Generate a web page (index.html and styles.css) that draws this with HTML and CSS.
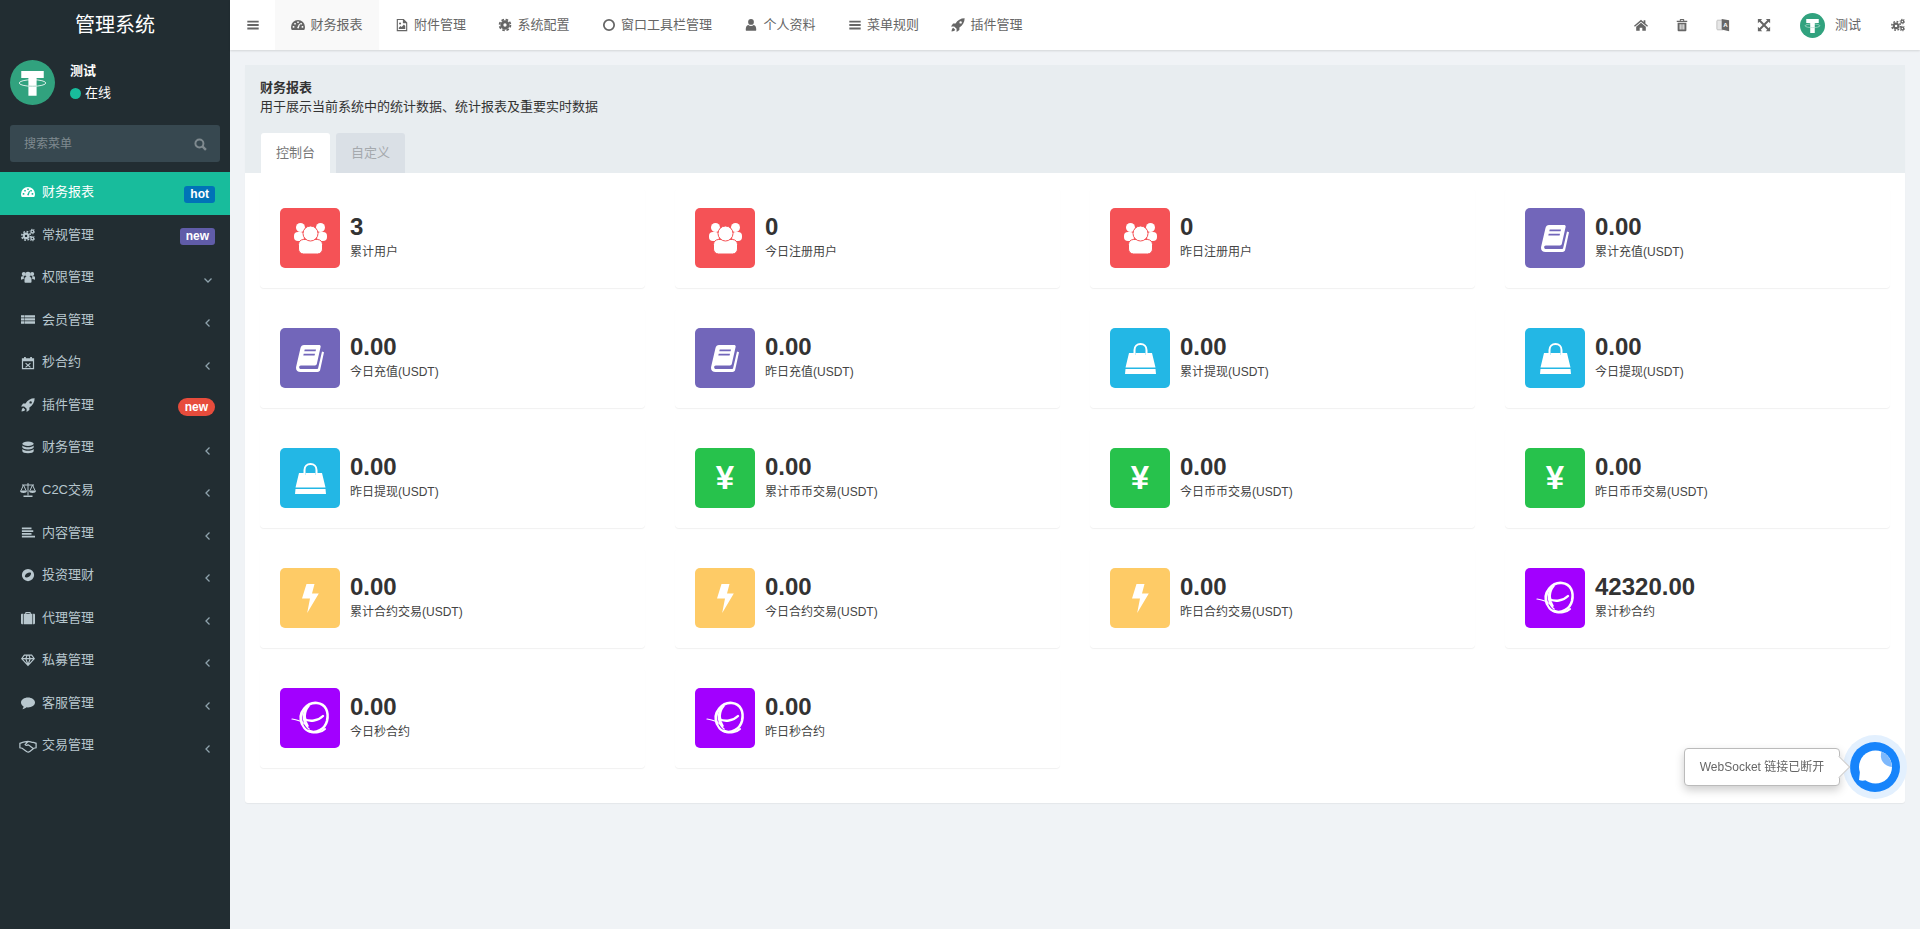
FILE: index.html
```html
<!DOCTYPE html>
<html lang="zh-CN">
<head>
    <meta charset="UTF-8">
    <title>管理系统</title>
    <link rel="stylesheet" href="styles.css">
</head>
<body>
    <!-- Icon sprite -->
    <svg class="sprite" xmlns="http://www.w3.org/2000/svg">
        <symbol id="i-dashboard" viewBox="0 0 16 16"><path fill-rule="evenodd" d="M8 2.2a8 8 0 0 0-8 8c0 1.4.3 2.6.9 3.6h14.2c.6-1 .9-2.2.9-3.6a8 8 0 0 0-8-8zM2 9.2h1.8V11H2zM3.7 5.6h1.8v1.8H3.7zM7.1 4h1.8v1.8H7.1zM10.6 5.6h1.8v1.8h-1.8zM12.2 9.2H14V11h-1.8zM6.9 11.3l2.4-4.8 1 .4-1.5 5z"/></symbol>
        <symbol id="i-cogs" viewBox="0 0 16 16"><g fill="none" stroke="currentColor"><circle cx="5.8" cy="9" r="2.6" stroke-width="2.4"/><circle cx="5.8" cy="9" r="4.9" stroke-width="1.8" stroke-dasharray="2 1.85"/><circle cx="13" cy="4" r="1.5" stroke-width="1.4"/><circle cx="13" cy="4" r="2.6" stroke-width="1.2" stroke-dasharray="1.2 1.25"/><circle cx="13" cy="12" r="1.5" stroke-width="1.4"/><circle cx="13" cy="12" r="2.6" stroke-width="1.2" stroke-dasharray="1.2 1.25"/></g></symbol>
        <symbol id="i-users" viewBox="0 0 16 16"><circle cx="3.2" cy="4.6" r="2.3"/><circle cx="12.8" cy="4.6" r="2.3"/><circle cx="8" cy="5" r="3.1"/><path d="M0 11V8.600c0-1 .8-1.600 1.600-1.600h2c-.5 1-.6 2-.4 3.200-1 .1-2 .4-3.200.8zM16 11V8.600c0-1-.8-1.600-1.600-1.600h-2c.5 1 .6 2 .4 3.200 1 .1 2 .4 3.200.8zM4 10c0-1.200.8-2 1.800-2h4.400c1 0 1.800.8 1.800 2v3.700c0 .6-.4.8-1 .8H5c-.6 0-1-.2-1-.8z"/></symbol>
        <symbol id="i-list" viewBox="0 0 16 16"><path d="M0 2.500h3.800v2.700H0zM4.300 2.500H16v2.700H4.300zM0 6h3.800v2.700H0zM4.300 6H16v2.700H4.300zM0 9.500h3.800v2.700H0zM4.300 9.500H16v2.700H4.300z"/></symbol>
        <symbol id="i-calendar" viewBox="0 0 16 16"><path fill-rule="evenodd" d="M1 2.500h2.500V1h2v1.500h5V1h2v1.500H15V15H1zM2.400 6v7.600h11.200V6z"/><path d="M5.600 7.600l2.400 2 2.400-2 .8.9L9 10.500l2.200 2-.8.9L8 11.400l-2.400 2-.8-.9 2.200-2-2.200-2z"/></symbol>
        <symbol id="i-rocket" viewBox="0 0 16 16"><path fill-rule="evenodd" d="M15.600.4C11 .4 7.400 2.600 5.200 6.400H2.400L0 9.600h3.600l2.800 2.800V16l3.200-2.400v-2.800c3.800-2.200 6-5.800 6-10.400zM11 3.600a1.400 1.400 0 1 1 0 2.800 1.400 1.400 0 0 1 0-2.800z"/><path d="M2.600 11.200c-1.200.6-1.800 2-2 4.200 2.200-.2 3.600-.8 4.200-2z"/></symbol>
        <symbol id="i-database" viewBox="0 0 16 16"><ellipse cx="8" cy="3.200" rx="6.500" ry="2.500"/><path d="M1.500 5v2.200c0 1.400 2.900 2.500 6.500 2.500s6.500-1.100 6.500-2.500V5C13.400 6.400 10.800 7 8 7S2.600 6.400 1.500 5zM1.500 9.200v2.200C1.500 12.900 4.400 14 8 14s6.500-1.100 6.500-2.600V9.200C13.400 10.600 10.800 11.200 8 11.200S2.600 10.600 1.500 9.200z"/></symbol>
        <symbol id="i-scale" viewBox="0 0 16 16"><path fill="none" stroke="currentColor" d="M8 1v12.500M2 3h12M3.500 3L1 8.500M3.500 3L6 8.500M12.500 3L10 8.500M12.500 3L15 8.500"/><path d="M0 8.500h7C7 10.300 5.500 11 3.500 11S0 10.300 0 8.500zM9 8.500h7c0 1.800-1.500 2.500-3.500 2.500S9 10.300 9 8.500zM3.500 13.500h9V15h-9z"/></symbol>
        <symbol id="i-align" viewBox="0 0 16 16"><path d="M1 1.800h11v1.900H1zM1 4.900h13v1.900H1zM1 8h11v1.900H1zM1 11.100h15V13H1z"/></symbol>
        <symbol id="i-compass" viewBox="0 0 16 16"><path fill-rule="evenodd" d="M8 1a7 7 0 1 1 0 14A7 7 0 0 1 8 1zM4.600 10.400c.8.800 3.200.6 4.900-.6 1.400-1.100 2.300-3.300 1.900-4.200-.8-.6-3.300-.4-4.900.6-1.500 1-2.400 3.300-1.900 4.200z"/></symbol>
        <symbol id="i-briefcase" viewBox="0 0 16 16"><path fill-rule="evenodd" d="M4.800 3V2c0-.6.4-1 1-1h4.400c.6 0 1 .4 1 1v1H13v12H3V3zM6 3h4V2.200H6z"/><path d="M0 4.200C0 3.500.5 3 1 3h1.200v12H1c-.5 0-1-.5-1-1.200zM16 4.200c0-.7-.5-1.200-1-1.200h-1.200v12H15c.5 0 1-.5 1-1.200z"/></symbol>
        <symbol id="i-diamond" viewBox="0 0 16 16"><path fill="none" stroke="currentColor" stroke-width="1.300" d="M3.800 2.500h8.400L15.200 6.500 8 14.200.8 6.500zM.8 6.500h14.400M5.500 6.500L8 13.500l2.500-7M5.500 6.500l1.500-4M10.500 6.500L9 2.500"/></symbol>
        <symbol id="i-comment" viewBox="0 0 16 16"><path d="M8 1.800c4.400 0 8 2.500 8 5.600S12.400 13 8 13l-1.600-.1C5 14.200 3.200 15 1.500 15c.8-.9 1.300-1.900 1.500-3.100C1.200 10.800 0 9.200 0 7.400 0 4.300 3.600 1.800 8 1.800z"/></symbol>
        <symbol id="i-handshake" viewBox="0 0 20 16"><path fill="none" stroke="currentColor" stroke-width="1.400" d="M1 5l3-1c2 0 3-1.200 6-1.200 2.500 0 3.500 1.200 6 1.200l3 1v5l-2.500.5L12 14c-1 1-2.500.8-3.600 0L3.500 10.500 1 10zM10 3L6.800 6.500c1 1.200 2.500 1 3.400.2 1.200.3 3.500 2.500 5.300 3.800"/></symbol>
        <symbol id="i-bars" viewBox="0 0 16 16"><path d="M1.500 3h13v2.200h-13zM1.500 6.900h13v2.200h-13zM1.500 10.800h13V13h-13z"/></symbol>
        <symbol id="i-file" viewBox="0 0 16 16"><path fill-rule="evenodd" d="M2 1h8l4 4v10H2zM3.300 2.300v11.400h9.400V6H9V2.300z"/><circle cx="5.800" cy="6.300" r="1.200"/><path d="M4.300 12.500V11l2-2 1.300 1.300 2.600-2.800 1.500 1.700v3.300z"/></symbol>
        <symbol id="i-gear" viewBox="0 0 16 16"><g fill="none" stroke="currentColor"><circle cx="8" cy="8" r="3.600" stroke-width="3.400"/><circle cx="8" cy="8" r="6.200" stroke-width="2" stroke-dasharray="2.900 1.970"/></g></symbol>
        <symbol id="i-circle" viewBox="0 0 16 16"><circle cx="8" cy="8" r="5.900" fill="none" stroke="currentColor" stroke-width="2"/></symbol>
        <symbol id="i-user" viewBox="0 0 16 16"><circle cx="8" cy="4.500" r="3.300"/><path d="M3 14.500c-.8 0-1-.5-1-1.200 0-2.800.8-5 2.900-5.300.8.700 1.900 1.100 3.100 1.100s2.300-.4 3.100-1.100c2.100.3 2.900 2.500 2.900 5.300 0 .7-.2 1.200-1 1.200z"/></symbol>
        <symbol id="i-home" viewBox="0 0 16 16"><path d="M8 2L0 8.800l1 1.100L8 4.200l7 5.700 1-1.100-3-2.500V2.500h-2V4.700z"/><path d="M8 5.500l-5.500 4.400V14.500h4v-3.500h3v3.500h4V9.900z"/></symbol>
        <symbol id="i-trash" viewBox="0 0 16 16"><path fill-rule="evenodd" d="M5.500 3V1.800c0-.5.300-.8.800-.8h3.400c.5 0 .8.300.8.800V3H14v1.500H2V3zM6.700 3h2.600v-.8H6.700zM3 5.500h10V14c0 .6-.4 1-1 1H4c-.6 0-1-.4-1-1zM5.300 7v6.200h1.200V7zM7.400 7v6.200h1.200V7zM9.500 7v6.200h1.200V7z"/></symbol>
        <symbol id="i-expand" viewBox="0 0 16 16"><path d="M1 1h5L4.300 2.700l3.700 3.700 3.700-3.700L10 1h5v5l-1.700-1.700L9.600 8l3.700 3.700L15 10v5h-5l1.700-1.700L8 9.600l-3.700 3.700L6 15H1v-5l1.700 1.700L6.400 8 2.700 4.300 1 6z"/></symbol>
        <symbol id="i-tether" viewBox="0 0 44 44"><circle cx="22" cy="22" r="22" fill="#31a27e"/><path fill="#fff" d="M11 10.700h22v7h-7V35h-8V17.700h-7z"/><ellipse cx="22" cy="22.500" rx="13" ry="3.200" fill="none" stroke="#fff" stroke-width=".8"/><path fill="none" stroke="#8fc9b5" stroke-width=".8" d="M18 25.500q4 .3 8 0"/></symbol>
        <symbol id="i-group" viewBox="0 0 33 31"><circle cx="6.500" cy="4.500" r="4.500" fill="#fff"/><circle cx="26.500" cy="4.500" r="4.500" fill="#fff"/><rect x="0" y="9" width="10" height="9" rx="4" fill="#fff"/><rect x="23" y="9" width="10" height="9" rx="4" fill="#fff"/><rect x="4.500" y="16.500" width="24" height="14.500" rx="5" fill="#fff" stroke="#f55256" stroke-width="1"/><circle cx="16.500" cy="10.500" r="7.500" fill="#fff" stroke="#f55256" stroke-width="1"/></symbol>
        <symbol id="i-book" viewBox="0 0 28 27"><path fill="#fff" d="M8 0h15c1.300 0 1.900.8 1.600 2L20.800 19c-.2.900-.9 1.400-1.800 1.400H4.800c-2.200 0-2.200 3.600.2 3.600h16.200c.5 0 .8-.2.900-.7L26 6.500l2 .8-3.800 17.500c-.3 1.300-1.200 2.200-2.700 2.200H4.500C1.300 27-.6 25 .2 21.500L4.500 3C5 1 6.200 0 8 0z"/><path fill="#7266ba" d="M8.700 4.500h11.300l-.4 1.700H8.300zM7.700 8.800H19l-.4 1.700H7.300z"/></symbol>
        <symbol id="i-bag" viewBox="0 0 31 31"><path fill="none" stroke="#fff" stroke-width="2" d="M9.500 12V7c0-3.500 2.500-6 6-6s6 2.500 6 6v5"/><path fill="#fff" d="M4 10h5.500v2h1V10h10v2h1V10H27l3.500 14.500H.5z"/><path fill="#fff" d="M.5 26h30l.5 5H0z"/></symbol>
        <symbol id="i-bolt" viewBox="0 0 17 29"><path fill="#fff" d="M4.500 0h8L10 9.500h6.800L5.200 29 8 14.500H0z"/></symbol>
        <symbol id="i-swirl" viewBox="0 0 60 60"><g fill="none" stroke="#fff" stroke-linecap="round"><path stroke-width="2.600" d="M22 36C17 24 28 14 37 15c9 1 12 9 10 18-2 8-11 13-18 10"/><path stroke-width="2" d="M23 23c-4 8-1 17 5 20 7 3 14 1 17-2"/><path stroke-width="1.600" d="M26 20c-4 7-3 16 3 21M29 18c-5 6-5 14-1 20"/><path stroke-width="2.400" d="M24 31c6 3 14 2 19-3"/><path stroke-width="1.200" d="M12 31c4 .5 9 2 13 5"/></g></symbol>
        <symbol id="i-bubble" viewBox="0 0 50 50"><circle cx="25.500" cy="25" r="16.500" fill="#fff"/><path fill="#fff" d="M10 29L9 38c2.500 1 6.500 1 9.500-1z"/><path fill="#7db8fc" d="M31.500 9.600A16.500 16.500 0 0 1 42 25 11.500 11.500 0 0 1 31.500 9.600z"/></symbol>
    </svg>

    <div class="wrapper">
        <!-- Sidebar -->
        <aside class="sidebar">
            <div class="logo">管理系统</div>
            <div class="user-panel">
                <svg class="avatar"><use href="#i-tether"/></svg>
                <div class="user-info">
                    <div class="user-name">测试</div>
                    <div class="user-status"><span class="status-dot"></span>在线</div>
                </div>
            </div>
            <div class="search">
                <span>搜索菜单</span>
                <svg class="search-icon" viewBox="0 0 12 12"><circle cx="5" cy="5" r="3.700" fill="none" stroke="currentColor" stroke-width="1.800"/><path d="M7.800 7.800L11 11" stroke="currentColor" stroke-width="2.200"/></svg>
            </div>
            <ul class="menu">
                <li class="menu-item active"><svg class="menu-icon"><use href="#i-dashboard"/></svg><span>财务报表</span><em class="badge badge-blue">hot</em></li>
                <li class="menu-item"><svg class="menu-icon"><use href="#i-cogs"/></svg><span>常规管理</span><em class="badge badge-purple">new</em></li>
                <li class="menu-item"><svg class="menu-icon"><use href="#i-users"/></svg><span>权限管理</span><svg class="chevron" viewBox="0 0 10 10"><path d="M1.500 3.500L5 7l3.500-3.500"/></svg></li>
                <li class="menu-item"><svg class="menu-icon"><use href="#i-list"/></svg><span>会员管理</span><svg class="chevron" viewBox="0 0 10 10"><path d="M6.500 1.500L3 5l3.500 3.500"/></svg></li>
                <li class="menu-item"><svg class="menu-icon"><use href="#i-calendar"/></svg><span>秒合约</span><svg class="chevron" viewBox="0 0 10 10"><path d="M6.500 1.500L3 5l3.500 3.500"/></svg></li>
                <li class="menu-item"><svg class="menu-icon"><use href="#i-rocket"/></svg><span>插件管理</span><em class="badge badge-red">new</em></li>
                <li class="menu-item"><svg class="menu-icon"><use href="#i-database"/></svg><span>财务管理</span><svg class="chevron" viewBox="0 0 10 10"><path d="M6.500 1.500L3 5l3.500 3.500"/></svg></li>
                <li class="menu-item"><svg class="menu-icon menu-icon-wide"><use href="#i-scale"/></svg><span>C2C交易</span><svg class="chevron" viewBox="0 0 10 10"><path d="M6.500 1.500L3 5l3.500 3.500"/></svg></li>
                <li class="menu-item"><svg class="menu-icon"><use href="#i-align"/></svg><span>内容管理</span><svg class="chevron" viewBox="0 0 10 10"><path d="M6.500 1.500L3 5l3.500 3.500"/></svg></li>
                <li class="menu-item"><svg class="menu-icon"><use href="#i-compass"/></svg><span>投资理财</span><svg class="chevron" viewBox="0 0 10 10"><path d="M6.500 1.500L3 5l3.500 3.500"/></svg></li>
                <li class="menu-item"><svg class="menu-icon"><use href="#i-briefcase"/></svg><span>代理管理</span><svg class="chevron" viewBox="0 0 10 10"><path d="M6.500 1.500L3 5l3.500 3.500"/></svg></li>
                <li class="menu-item"><svg class="menu-icon"><use href="#i-diamond"/></svg><span>私募管理</span><svg class="chevron" viewBox="0 0 10 10"><path d="M6.500 1.500L3 5l3.500 3.500"/></svg></li>
                <li class="menu-item"><svg class="menu-icon"><use href="#i-comment"/></svg><span>客服管理</span><svg class="chevron" viewBox="0 0 10 10"><path d="M6.500 1.500L3 5l3.500 3.500"/></svg></li>
                <li class="menu-item"><svg class="menu-icon menu-icon-wide"><use href="#i-handshake"/></svg><span>交易管理</span><svg class="chevron" viewBox="0 0 10 10"><path d="M6.500 1.500L3 5l3.500 3.500"/></svg></li>
            </ul>
        </aside>

        <div class="main">
            <!-- Top bar -->
            <header class="navbar">
                <div class="nav-toggle"><svg class="nav-icon"><use href="#i-bars"/></svg></div>
                <nav class="nav-tabs">
                    <a class="nav-tab active"><svg class="nav-icon"><use href="#i-dashboard"/></svg>财务报表</a>
                    <a class="nav-tab"><svg class="nav-icon"><use href="#i-file"/></svg>附件管理</a>
                    <a class="nav-tab"><svg class="nav-icon"><use href="#i-gear"/></svg>系统配置</a>
                    <a class="nav-tab"><svg class="nav-icon"><use href="#i-circle"/></svg>窗口工具栏管理</a>
                    <a class="nav-tab"><svg class="nav-icon"><use href="#i-user"/></svg>个人资料</a>
                    <a class="nav-tab"><svg class="nav-icon"><use href="#i-bars"/></svg>菜单规则</a>
                    <a class="nav-tab"><svg class="nav-icon"><use href="#i-rocket"/></svg>插件管理</a>
                </nav>
                <div class="nav-right">
                    <a class="nav-action"><svg class="nav-icon"><use href="#i-home"/></svg></a>
                    <a class="nav-action"><svg class="nav-icon"><use href="#i-trash"/></svg></a>
                    <a class="nav-action">
                        <svg class="nav-icon" viewBox="0 0 16 16"><rect x="1" y="2.500" width="8" height="11" rx="1" fill="#e6e6e6" stroke="#bbb"/><path fill="#666" d="M6.500 1l8.500 1.500V15L6.500 13z"/><text x="8.200" y="10.500" class="translate-letter">A</text></svg>
                    </a>
                    <a class="nav-action"><svg class="nav-icon"><use href="#i-expand"/></svg></a>
                    <a class="nav-user"><svg class="nav-avatar"><use href="#i-tether"/></svg>测试</a>
                    <a class="nav-cogs"><svg class="nav-icon"><use href="#i-cogs"/></svg></a>
                </div>
            </header>

            <!-- Main content -->
            <main class="content">
                <section class="panel">
                    <div class="panel-heading">
                        <div class="panel-title">财务报表</div>
                        <div class="panel-desc">用于展示当前系统中的统计数据、统计报表及重要实时数据</div>
                        <div class="panel-tabs">
                            <a class="panel-tab active">控制台</a>
                            <a class="panel-tab">自定义</a>
                        </div>
                    </div>
                    <div class="panel-body">
                        <div class="stat-grid">
                            <div class="stat"><div class="tile tile-red"><svg class="glyph-group"><use href="#i-group"/></svg></div><div><div class="stat-value">3</div><div class="stat-label">累计用户</div></div></div>
                            <div class="stat"><div class="tile tile-red"><svg class="glyph-group"><use href="#i-group"/></svg></div><div><div class="stat-value">0</div><div class="stat-label">今日注册用户</div></div></div>
                            <div class="stat"><div class="tile tile-red"><svg class="glyph-group"><use href="#i-group"/></svg></div><div><div class="stat-value">0</div><div class="stat-label">昨日注册用户</div></div></div>
                            <div class="stat"><div class="tile tile-purple"><svg class="glyph-book"><use href="#i-book"/></svg></div><div><div class="stat-value">0.00</div><div class="stat-label">累计充值(USDT)</div></div></div>

                            <div class="stat"><div class="tile tile-purple"><svg class="glyph-book"><use href="#i-book"/></svg></div><div><div class="stat-value">0.00</div><div class="stat-label">今日充值(USDT)</div></div></div>
                            <div class="stat"><div class="tile tile-purple"><svg class="glyph-book"><use href="#i-book"/></svg></div><div><div class="stat-value">0.00</div><div class="stat-label">昨日充值(USDT)</div></div></div>
                            <div class="stat"><div class="tile tile-blue"><svg class="glyph-bag"><use href="#i-bag"/></svg></div><div><div class="stat-value">0.00</div><div class="stat-label">累计提现(USDT)</div></div></div>
                            <div class="stat"><div class="tile tile-blue"><svg class="glyph-bag"><use href="#i-bag"/></svg></div><div><div class="stat-value">0.00</div><div class="stat-label">今日提现(USDT)</div></div></div>

                            <div class="stat"><div class="tile tile-blue"><svg class="glyph-bag"><use href="#i-bag"/></svg></div><div><div class="stat-value">0.00</div><div class="stat-label">昨日提现(USDT)</div></div></div>
                            <div class="stat"><div class="tile tile-green">¥</div><div><div class="stat-value">0.00</div><div class="stat-label">累计币币交易(USDT)</div></div></div>
                            <div class="stat"><div class="tile tile-green">¥</div><div><div class="stat-value">0.00</div><div class="stat-label">今日币币交易(USDT)</div></div></div>
                            <div class="stat"><div class="tile tile-green">¥</div><div><div class="stat-value">0.00</div><div class="stat-label">昨日币币交易(USDT)</div></div></div>

                            <div class="stat"><div class="tile tile-yellow"><svg class="glyph-bolt"><use href="#i-bolt"/></svg></div><div><div class="stat-value">0.00</div><div class="stat-label">累计合约交易(USDT)</div></div></div>
                            <div class="stat"><div class="tile tile-yellow"><svg class="glyph-bolt"><use href="#i-bolt"/></svg></div><div><div class="stat-value">0.00</div><div class="stat-label">今日合约交易(USDT)</div></div></div>
                            <div class="stat"><div class="tile tile-yellow"><svg class="glyph-bolt"><use href="#i-bolt"/></svg></div><div><div class="stat-value">0.00</div><div class="stat-label">昨日合约交易(USDT)</div></div></div>
                            <div class="stat"><div class="tile tile-violet"><svg class="glyph-swirl"><use href="#i-swirl"/></svg></div><div><div class="stat-value">42320.00</div><div class="stat-label">累计秒合约</div></div></div>

                            <div class="stat"><div class="tile tile-violet"><svg class="glyph-swirl"><use href="#i-swirl"/></svg></div><div><div class="stat-value">0.00</div><div class="stat-label">今日秒合约</div></div></div>
                            <div class="stat"><div class="tile tile-violet"><svg class="glyph-swirl"><use href="#i-swirl"/></svg></div><div><div class="stat-value">0.00</div><div class="stat-label">昨日秒合约</div></div></div>
                        </div>
                    </div>
                </section>
            </main>
        </div>
    </div>

    <!-- Chat widget -->
    <div class="chat">
        <div class="chat-tip">WebSocket 链接已断开</div>
        <div class="chat-bubble"><svg class="chat-icon"><use href="#i-bubble"/></svg></div>
    </div>
</body>
</html>
```

FILE: styles.css
```css
/* Reset and base styles */
* {
    margin: 0;
    padding: 0;
    box-sizing: border-box;
}

body {
    background-color: #f0f3f6;
    color: #333;
    font-family: "Liberation Sans", "Noto Sans CJK SC", sans-serif;
    font-size: 13px;
    line-height: 1.42857;
    min-height: 100vh;
    overflow: hidden;
}

.sprite {
    display: none;
}

svg {
    fill: currentColor;
}

.wrapper {
    display: flex;
    min-height: 100vh;
}

/* Sidebar */
.sidebar {
    width: 230px;
    flex-shrink: 0;
    background: #222d32;
    color: #b8c7ce;
}

.logo {
    height: 50px;
    line-height: 50px;
    text-align: center;
    font-size: 20px;
    color: #fff;
}

.user-panel {
    display: flex;
    padding: 10px;
    height: 65px;
}

.avatar {
    width: 45px;
    height: 45px;
}

.user-info {
    margin-left: 15px;
    color: #fff;
}

.user-name {
    font-weight: 700;
    line-height: 18px;
    margin-top: 2px;
}

.user-status {
    display: flex;
    align-items: center;
    line-height: 18px;
    margin-top: 4px;
}

.status-dot {
    width: 11px;
    height: 11px;
    margin-right: 4px;
    border-radius: 50%;
    background: #18bc9c;
}

.search {
    display: flex;
    align-items: center;
    justify-content: space-between;
    height: 37px;
    margin: 10px;
    padding: 2px 14px 0;
    border-radius: 3px;
    background: #374850;
    color: #7f8a8f;
    font-size: 12px;
}

.search-icon {
    width: 13px;
    height: 13px;
    margin-right: -1px;
}

.menu {
    list-style: none;
}

.menu-item {
    display: flex;
    align-items: center;
    height: 42.57px;
    padding: 0 15px 2px 21px;
}

.menu-item.active {
    background: #18bc9c;
    color: #fff;
}

.menu-icon {
    width: 14px;
    height: 14px;
    margin-right: 7px;
    flex-shrink: 0;
    overflow: visible;
}

.menu-icon-wide {
    width: 18px;
    height: 16px;
    margin-left: -2px;
    margin-right: 5px;
}

.chevron {
    width: 10px;
    height: 10px;
    margin-left: auto;
    margin-right: 2px;
    transform: translateY(3px);
    fill: none;
    stroke: #8fa3ad;
    stroke-width: 1.3;
}

.badge {
    margin-left: auto;
    height: 17px;
    line-height: 17px;
    padding: 0 6px;
    border-radius: 3px;
    color: #fff;
    font-size: 12px;
    font-style: normal;
    font-weight: 700;
    transform: translateY(2px);
}

.badge-blue {
    background: #0073b7;
}

.badge-purple {
    background: #605ca8;
}

.badge-red {
    background: #e74c3c;
    height: 18px;
    line-height: 18px;
    padding: 0 7px;
    border-radius: 9px;
}

/* Top bar */
.main {
    flex: 1;
    min-width: 0;
}

.navbar {
    display: flex;
    height: 50px;
    background: #fff;
    color: #666;
    box-shadow: 0 1px 2px rgba(0, 0, 0, 0.12);
    position: relative;
}

.nav-toggle {
    width: 45px;
    display: flex;
    align-items: center;
    justify-content: center;
}

.nav-tabs {
    display: flex;
}

.nav-tab {
    display: flex;
    align-items: center;
    padding: 0 16px;
}

.nav-tab.active {
    background: #f9f9f9;
}

.nav-tab .nav-icon {
    margin-right: 5.5px;
}

.nav-icon {
    width: 14px;
    height: 14px;
    flex-shrink: 0;
}

.translate-letter {
    fill: #fff;
    font-size: 7px;
    font-weight: 700;
}

.nav-right {
    display: flex;
    align-items: center;
    margin-left: auto;
    padding-right: 15px;
}

.nav-action {
    width: 41px;
    display: flex;
    justify-content: center;
}

.nav-user {
    display: flex;
    align-items: center;
    margin-left: 15px;
}

.nav-avatar {
    width: 25px;
    height: 25px;
    margin-right: 10px;
}

.nav-cogs {
    display: flex;
    margin-left: 30px;
}

/* Main content */
.content {
    padding: 15px;
}

.panel {
    background: #fff;
    border-radius: 3px;
    box-shadow: 0 1px 1px rgba(0, 0, 0, 0.05);
}

.panel-heading {
    background: #e8edf0;
    height: 108px;
    padding: 13px 15px 0;
    line-height: 19px;
}

.panel-title {
    font-weight: 700;
    color: #333;
}

.panel-tabs {
    display: flex;
    gap: 6px;
    margin: 17px 0 0 1px;
}

.panel-tab {
    height: 40px;
    line-height: 40px;
    padding: 0 15px;
    border-radius: 3px 3px 0 0;
    background: #dae0e6;
    color: #a5a9ad;
}

.panel-tab.active {
    background: #fff;
    color: #777;
}

.panel-body {
    padding: 15px 15px 35px;
}

/* Stat cards */
.stat-grid {
    display: grid;
    grid-template-columns: repeat(4, 1fr);
    gap: 20px 30px;
}

.stat {
    display: flex;
    gap: 10px;
    height: 100px;
    padding: 20px;
    border-radius: 4px;
    box-shadow: 0 1px 1px rgba(0, 0, 0, 0.06);
}

.stat-value {
    margin-top: 4px;
    font-size: 24px;
    font-weight: 700;
    line-height: 30px;
    color: #333;
}

.stat-label {
    font-size: 12px;
    line-height: 20px;
    color: #444;
}

.tile {
    display: flex;
    align-items: center;
    justify-content: center;
    width: 60px;
    height: 60px;
    flex-shrink: 0;
    border-radius: 5px;
    color: #fff;
    font-size: 33px;
    font-weight: 700;
}

.tile-red {
    background: #f55256;
}

.tile-purple {
    background: #7266ba;
}

.tile-blue {
    background: #23b7e5;
}

.tile-green {
    background: #27c24c;
}

.tile-yellow {
    background: #fecb66;
}

.tile-violet {
    background: #a200ff;
}

.glyph-group {
    width: 33px;
    height: 31px;
}

.glyph-book {
    width: 28px;
    height: 27px;
}

.glyph-bag {
    width: 31px;
    height: 31px;
}

.glyph-bolt {
    width: 17px;
    height: 29px;
}

.glyph-swirl {
    width: 60px;
    height: 60px;
}

/* Chat widget */
.chat {
    position: fixed;
    right: 20px;
    bottom: 137px;
    display: flex;
    align-items: center;
    gap: 10px;
}

.chat-tip {
    position: relative;
    width: 156px;
    height: 38px;
    line-height: 36px;
    text-align: center;
    border: 1px solid #bbb;
    border-radius: 4px;
    background: #fff;
    color: #666;
    font-size: 12px;
    box-shadow: 0 4px 10px rgba(0, 0, 0, 0.2);
}

.chat-tip::after {
    content: "";
    position: absolute;
    right: -8px;
    top: 10px;
    width: 15px;
    height: 15px;
    background: #fff;
    border-top: 1px solid #ccc;
    border-right: 1px solid #ccc;
    transform: rotate(45deg);
}

.chat-bubble {
    width: 50px;
    height: 50px;
    border-radius: 50%;
    background: #1784fb;
    box-shadow: 0 0 0 7px #e3f0fe;
}

.chat-icon {
    display: block;
    width: 50px;
    height: 50px;
}
```
